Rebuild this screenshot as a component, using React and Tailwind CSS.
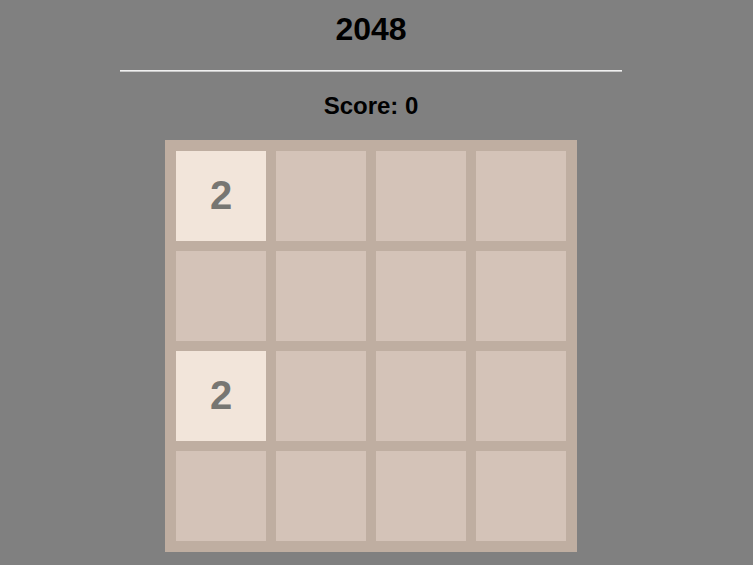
const board = [
  [2, 0, 0, 0],
  [0, 0, 0, 0],
  [2, 0, 0, 0],
  [0, 0, 0, 0],
];

const Tile = ({ value }) => {
  if (!value) {
    return <div className="w-[90px] h-[90px] bg-[#d4c3b8]" />;
  }
  return (
    <div className="w-[90px] h-[90px] bg-[#f2e5da] flex items-center justify-center pb-[2px] text-[40px] font-bold text-[#777672]">
      {value}
    </div>
  );
};

const App = () => {
  return (
    <div
      className="min-h-[565px] bg-[#808080] text-black"
      style={{ fontFamily: '"Liberation Sans", Arial, sans-serif' }}
    >
      <div className="w-[742px] flex flex-col items-center">
        <h1 className="pt-[11px] text-[32px] leading-[37px] font-bold">2048</h1>
        <div className="mt-[22px] w-[502px] h-[2px] border-t border-[#f0f0f0] border-b border-b-[#c8c8c8]" />
        <h2 className="mt-[20px] text-[24px] leading-[27px] font-bold">Score: 0</h2>
        <div className="mt-[21px] bg-[#bfaea1] p-[11px] grid grid-cols-4 gap-[10px]">
          {board.flat().map((v, i) => (
            <Tile key={i} value={v} />
          ))}
        </div>
      </div>
    </div>
  );
};

export default App;
